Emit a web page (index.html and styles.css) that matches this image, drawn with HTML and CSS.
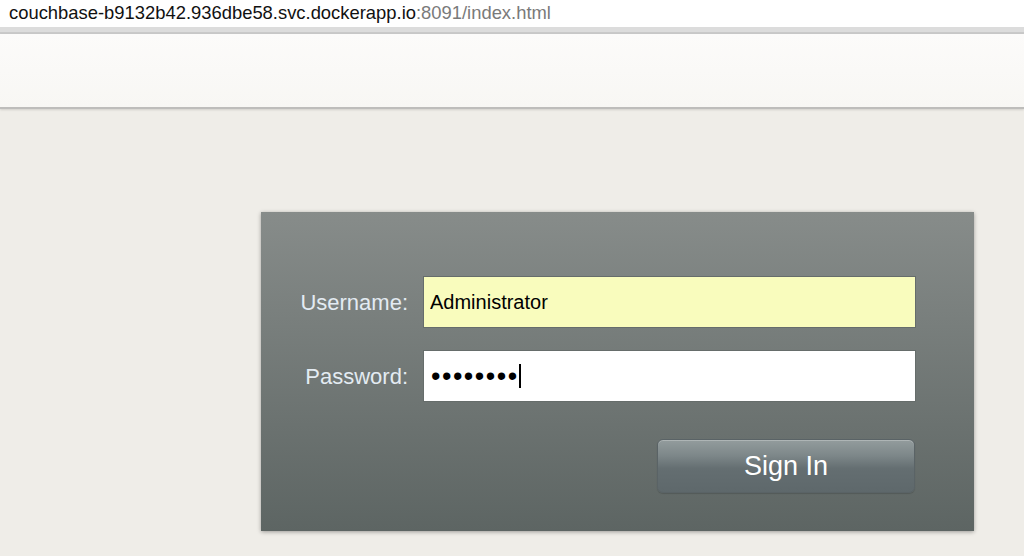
FILE: index.html
```html
<!DOCTYPE html>
<html>
<head>
<meta charset="utf-8">
<title>Couchbase Console</title>
<link rel="stylesheet" href="styles.css">
</head>
<body>
  <div class="urlbar"><span class="host">couchbase-b9132b42.936dbe58.svc.dockerapp.io</span><span class="path">:8091/index.html</span></div>
  <div class="urlbar-edge"></div>
  <header class="topbar"></header>
  <main class="stage">
    <form class="login">
      <label class="lbl" for="user">Username:</label>
      <input class="field field-user" id="user" type="text" value="Administrator">
      <label class="lbl" for="pass">Password:</label>
      <div class="field-wrap">
        <input class="field field-pass" id="pass" type="password" value="password">
        <span class="caret"></span>
      </div>
      <button class="signin" type="button">Sign In</button>
    </form>
  </main>
</body>
</html>
```

FILE: styles.css
```css
html, body {
  margin: 0;
  padding: 0;
  height: 100%;
}
body {
  background: #efede8;
  font-family: "Liberation Sans", Arial, sans-serif;
  overflow: hidden;
}
.urlbar {
  height: 27px;
  background: #ffffff;
  padding-left: 9px;
  font-size: 18.4px;
  line-height: 26px;
  color: #111;
  white-space: nowrap;
}
.urlbar .path {
  color: #7a7a7a;
}
.urlbar-edge {
  height: 5px;
  background: #dcdcdc;
  border-bottom: 2px solid #c9c9c9;
}
.topbar {
  height: 73px;
  background: linear-gradient(#fcfbfa, #f8f7f4);
  border-bottom: 2px solid #bebdbb;
  box-shadow: 0 1px 2px rgba(0,0,0,0.12);
}
.stage {
  padding-top: 103px;
  padding-left: 261px;
}
.login {
  width: 713px;
  box-sizing: border-box;
  padding: 64px 0 38px 0;
  background: linear-gradient(#878c8a, #5d6563);
  box-shadow: 0 1px 4px rgba(0,0,0,0.35);
  display: grid;
  grid-template-columns: 147px 493px;
  column-gap: 15px;
  row-gap: 22px;
  align-items: center;
}
.lbl {
  text-align: right;
  font-size: 22px;
  color: #e3ebf2;
  padding-top: 2px;
}
.field {
  box-sizing: border-box;
  width: 493px;
  height: 52px;
  margin: 0;
  border: 1px solid #666d6b;
  padding: 0 6px;
  font-family: "Liberation Sans", Arial, sans-serif;
  font-size: 20px;
  color: #000;
  outline: none;
  display: block;
}
.field-user {
  background: #f9fcbd;
}
.field-pass {
  background: #ffffff;
  font-size: 27px;
  letter-spacing: 1.5px;
  padding-left: 7px;
}
.field-wrap {
  position: relative;
}
.caret {
  position: absolute;
  left: 96px;
  top: 14px;
  width: 1.5px;
  height: 24px;
  background: #000;
}
.signin {
  grid-column: 2;
  justify-self: end;
  margin-top: 15px;
  margin-right: 1px;
  width: 258px;
  height: 54px;
  border: 1px solid #5a6366;
  border-radius: 6px;
  background: linear-gradient(#939c9d 0%, #7d8789 30%, #646e71 55%, #5e686b 100%);
  box-shadow: inset 0 1px 0 rgba(255,255,255,0.25), 0 1px 1px rgba(0,0,0,0.15);
  color: #ffffff;
  font-family: "Liberation Sans", Arial, sans-serif;
  font-size: 27px;
  padding: 0;
  cursor: pointer;
}
```
